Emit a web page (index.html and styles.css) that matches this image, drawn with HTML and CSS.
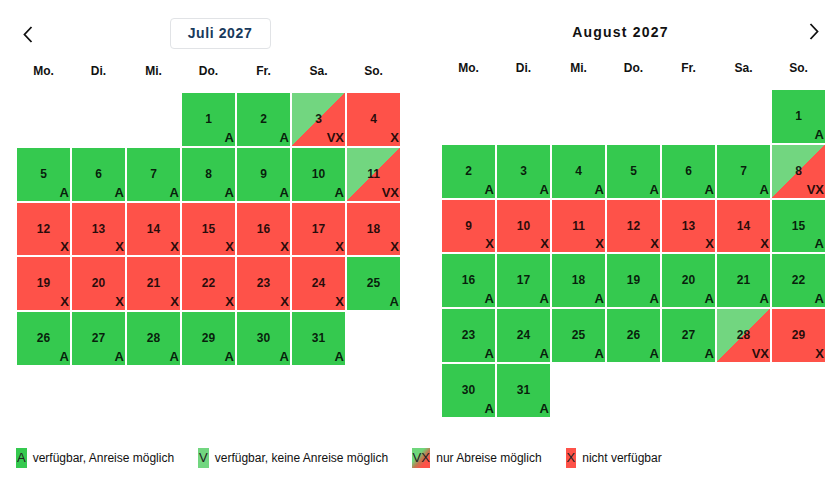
FILE: index.html
```html
<!DOCTYPE html>
<html lang="de">
<head>
<meta charset="utf-8">
<title>Belegungskalender</title>
<link rel="stylesheet" href="styles.css">
</head>
<body>
<div class="page">
  <div class="months">
    <section class="cal cal-left">
      <div class="cal-head head-left">
        <button class="nav" aria-label="zurück"><svg width="10" height="17" viewBox="0 0 10 17"><path d="M8.5 1 L1.5 8.5 L8.5 16" fill="none" stroke="#111" stroke-width="1.8"/></svg></button>
        <div class="title-wrap"><span class="title-btn">Juli 2027</span></div>
      </div>
      <div class="weekdays"><span>Mo.</span><span>Di.</span><span>Mi.</span><span>Do.</span><span>Fr.</span><span>Sa.</span><span>So.</span></div>
      <div class="grid">
        <div class="empty"></div><div class="empty"></div><div class="empty"></div>
        <div class="day a"><span class="n">1</span><span class="s">A</span></div>
        <div class="day a"><span class="n">2</span><span class="s">A</span></div>
        <div class="day vx"><span class="n">3</span><span class="s">VX</span></div>
        <div class="day x"><span class="n">4</span><span class="s">X</span></div>
        <div class="day a"><span class="n">5</span><span class="s">A</span></div>
        <div class="day a"><span class="n">6</span><span class="s">A</span></div>
        <div class="day a"><span class="n">7</span><span class="s">A</span></div>
        <div class="day a"><span class="n">8</span><span class="s">A</span></div>
        <div class="day a"><span class="n">9</span><span class="s">A</span></div>
        <div class="day a"><span class="n">10</span><span class="s">A</span></div>
        <div class="day vx"><span class="n">11</span><span class="s">VX</span></div>
        <div class="day x"><span class="n">12</span><span class="s">X</span></div>
        <div class="day x"><span class="n">13</span><span class="s">X</span></div>
        <div class="day x"><span class="n">14</span><span class="s">X</span></div>
        <div class="day x"><span class="n">15</span><span class="s">X</span></div>
        <div class="day x"><span class="n">16</span><span class="s">X</span></div>
        <div class="day x"><span class="n">17</span><span class="s">X</span></div>
        <div class="day x"><span class="n">18</span><span class="s">X</span></div>
        <div class="day x"><span class="n">19</span><span class="s">X</span></div>
        <div class="day x"><span class="n">20</span><span class="s">X</span></div>
        <div class="day x"><span class="n">21</span><span class="s">X</span></div>
        <div class="day x"><span class="n">22</span><span class="s">X</span></div>
        <div class="day x"><span class="n">23</span><span class="s">X</span></div>
        <div class="day x"><span class="n">24</span><span class="s">X</span></div>
        <div class="day a"><span class="n">25</span><span class="s">A</span></div>
        <div class="day a"><span class="n">26</span><span class="s">A</span></div>
        <div class="day a"><span class="n">27</span><span class="s">A</span></div>
        <div class="day a"><span class="n">28</span><span class="s">A</span></div>
        <div class="day a"><span class="n">29</span><span class="s">A</span></div>
        <div class="day a"><span class="n">30</span><span class="s">A</span></div>
        <div class="day a"><span class="n">31</span><span class="s">A</span></div>
      </div>
    </section>

    <section class="cal cal-right">
      <div class="cal-head head-right">
        <div class="title-wrap"><span class="title-plain">August 2027</span></div>
        <button class="nav" aria-label="weiter"><svg width="10" height="17" viewBox="0 0 10 17"><path d="M1.5 1 L8.5 8.5 L1.5 16" fill="none" stroke="#111" stroke-width="1.8"/></svg></button>
      </div>
      <div class="weekdays"><span>Mo.</span><span>Di.</span><span>Mi.</span><span>Do.</span><span>Fr.</span><span>Sa.</span><span>So.</span></div>
      <div class="grid">
        <div class="empty"></div><div class="empty"></div><div class="empty"></div><div class="empty"></div><div class="empty"></div><div class="empty"></div>
        <div class="day a"><span class="n">1</span><span class="s">A</span></div>
        <div class="day a"><span class="n">2</span><span class="s">A</span></div>
        <div class="day a"><span class="n">3</span><span class="s">A</span></div>
        <div class="day a"><span class="n">4</span><span class="s">A</span></div>
        <div class="day a"><span class="n">5</span><span class="s">A</span></div>
        <div class="day a"><span class="n">6</span><span class="s">A</span></div>
        <div class="day a"><span class="n">7</span><span class="s">A</span></div>
        <div class="day vx"><span class="n">8</span><span class="s">VX</span></div>
        <div class="day x"><span class="n">9</span><span class="s">X</span></div>
        <div class="day x"><span class="n">10</span><span class="s">X</span></div>
        <div class="day x"><span class="n">11</span><span class="s">X</span></div>
        <div class="day x"><span class="n">12</span><span class="s">X</span></div>
        <div class="day x"><span class="n">13</span><span class="s">X</span></div>
        <div class="day x"><span class="n">14</span><span class="s">X</span></div>
        <div class="day a"><span class="n">15</span><span class="s">A</span></div>
        <div class="day a"><span class="n">16</span><span class="s">A</span></div>
        <div class="day a"><span class="n">17</span><span class="s">A</span></div>
        <div class="day a"><span class="n">18</span><span class="s">A</span></div>
        <div class="day a"><span class="n">19</span><span class="s">A</span></div>
        <div class="day a"><span class="n">20</span><span class="s">A</span></div>
        <div class="day a"><span class="n">21</span><span class="s">A</span></div>
        <div class="day a"><span class="n">22</span><span class="s">A</span></div>
        <div class="day a"><span class="n">23</span><span class="s">A</span></div>
        <div class="day a"><span class="n">24</span><span class="s">A</span></div>
        <div class="day a"><span class="n">25</span><span class="s">A</span></div>
        <div class="day a"><span class="n">26</span><span class="s">A</span></div>
        <div class="day a"><span class="n">27</span><span class="s">A</span></div>
        <div class="day vx"><span class="n">28</span><span class="s">VX</span></div>
        <div class="day x"><span class="n">29</span><span class="s">X</span></div>
        <div class="day a"><span class="n">30</span><span class="s">A</span></div>
        <div class="day a"><span class="n">31</span><span class="s">A</span></div>
      </div>
    </section>
  </div>

  <div class="legend">
    <div class="leg-item"><span class="leg-box lb-a">A</span><span>verfügbar, Anreise möglich</span></div>
    <div class="leg-item"><span class="leg-box lb-v">V</span><span>verfügbar, keine Anreise möglich</span></div>
    <div class="leg-item"><span class="leg-box lb-vx">VX</span><span>nur Abreise möglich</span></div>
    <div class="leg-item"><span class="leg-box lb-x">X</span><span>nicht verfügbar</span></div>
  </div>
</div>
</body>
</html>
```

FILE: styles.css
```css
* { box-sizing: border-box; }

html, body {
  margin: 0;
  padding: 0;
  background: #fff;
}

body {
  font-family: "Liberation Sans", Arial, sans-serif;
  color: #111;
}

.page {
  width: 835px;
  padding-top: 18px;
}

.months {
  display: flex;
  align-items: flex-start;
  gap: 42px;
  padding-left: 17px;
}

.cal {
  width: 383px;
  display: flex;
  flex-direction: column;
}

.cal-head {
  display: flex;
  align-items: center;
}

.head-left { height: 31px; }
.head-right { height: 28px; }

.nav {
  width: 22px;
  height: 22px;
  padding: 0;
  border: 0;
  background: transparent;
  display: flex;
  align-items: center;
  justify-content: center;
}

.head-left .nav { margin-top: 2px; }
.head-right .nav { margin-top: -1px; }

.title-wrap {
  flex: 1;
  display: flex;
  justify-content: center;
}

.title-btn {
  display: inline-block;
  width: 101px;
  height: 31px;
  line-height: 29px;
  border: 1px solid #e1e3e6;
  border-radius: 4px;
  text-align: center;
  font-weight: bold;
  font-size: 14px;
  letter-spacing: 0.6px;
  color: #183a5c;
  margin-left: 1px;
}

.title-plain {
  font-weight: bold;
  font-size: 14px;
  letter-spacing: 1.2px;
  line-height: 28px;
  color: #111;
  margin-right: 4px;
}

.weekdays {
  display: grid;
  grid-template-columns: repeat(7, 1fr);
  gap: 2px;
  margin-top: 12px;
  height: 20px;
  line-height: 20px;
  font-size: 12px;
  font-weight: bold;
  text-align: center;
  color: #111;
}

.grid {
  display: grid;
  grid-template-columns: repeat(7, 1fr);
  grid-auto-rows: 52.8px;
  gap: 2px;
  margin-top: 12px;
}

.day {
  display: flex;
  flex-direction: column;
  padding: 19px 1px 1px 1px;
  color: rgba(0, 0, 0, 0.86);
  font-weight: bold;
}

.day .n {
  font-size: 12px;
  line-height: 14px;
  text-align: center;
}

.day .s {
  margin-top: auto;
  font-size: 13px;
  line-height: 14px;
  text-align: right;
}

.a { background: #35c94f; }
.x { background: #fe5249; }
.vx { background: linear-gradient(to bottom right, #72d680 50%, #fe5249 50%); }

.legend {
  display: flex;
  align-items: center;
  gap: 24px;
  padding-left: 16px;
  margin-top: 31px;
  font-size: 12px;
  color: #111;
}

.leg-item {
  display: flex;
  align-items: center;
  gap: 6px;
}

.leg-box {
  display: inline-block;
  height: 20px;
  line-height: 20px;
  padding: 0 1px;
  font-size: 13px;
  color: #222;
}

.lb-a { background: #35c94f; }
.lb-v { background: #72d680; }
.lb-x { background: #fe5249; }
.lb-vx {
  background: linear-gradient(to bottom right, #6fd67c 35%, #c3764f 55%, #fe5249 75%);
  padding: 0;
  width: 18px;
  text-align: center;
}
```
